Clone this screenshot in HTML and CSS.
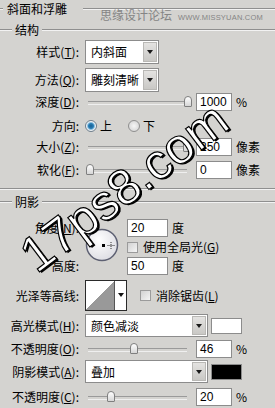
FILE: index.html
```html
<!DOCTYPE html>
<html lang="zh">
<head>
  <meta charset="UTF-8" />
  <title>斜面和浮雕</title>
  <link rel="stylesheet" href="styles.css">
</head>
<body>
  <div class="panel">
    <!-- Bevel and emboss: structure -->
    <div class="legend legend-main"><span class="tick"></span><span>斜面和浮雕</span><span class="rule"></span></div>
    <div class="site-mark">思缘设计论坛<span class="site-url">WWW.MISSYUAN.COM</span></div>

    <div class="legend legend-sub"><span class="tick"></span><span>结构</span><span class="rule"></span></div>

    <div class="row row-select">
      <span class="lbl">样式(<u>T</u>):</span>
      <div class="select select-narrow"><span class="select-value">内斜面</span><span class="select-btn"></span></div>
    </div>
    <div class="row row-select gap-4">
      <span class="lbl">方法(<u>Q</u>):</span>
      <div class="select select-narrow"><span class="select-value">雕刻清晰</span><span class="select-btn"></span></div>
    </div>
    <div class="row gap-1">
      <span class="lbl">深度(<u>D</u>):</span>
      <div class="slider"><span class="thumb" style="left: 99px"></span></div>
      <span class="field">1000</span>
      <span class="unit">%</span>
    </div>
    <div class="row gap-6">
      <span class="lbl">方向:</span>
      <span class="radio checked"></span><span class="radio-text">上</span>
      <span class="radio"></span><span class="radio-text">下</span>
    </div>
    <div class="row gap-3">
      <span class="lbl">大小(<u>Z</u>):</span>
      <div class="slider"><span class="thumb" style="left: 98px"></span></div>
      <span class="field">250</span>
      <span class="unit">像素</span>
    </div>
    <div class="row gap-5">
      <span class="lbl">软化(<u>F</u>):</span>
      <div class="slider"><span class="thumb" style="left: 1px"></span></div>
      <span class="field">0</span>
      <span class="unit">像素</span>
    </div>

    <div class="divider"></div>

    <!-- Shading -->
    <div class="legend legend-sub legend-shade"><span class="tick"></span><span>阴影</span><span class="rule"></span></div>

    <div class="angle-block">
      <span class="lbl angle-lbl">角度(<u>N</u>):</span>
      <div class="dial">
        <svg width="34" height="34" viewBox="0 0 34 34">
          <defs>
            <radialGradient id="dialFill" cx="40%" cy="35%" r="70%">
              <stop offset="0" stop-color="#ffffff" />
              <stop offset="1" stop-color="#dcdce2" />
            </radialGradient>
          </defs>
          <circle cx="17" cy="17" r="15.5" fill="url(#dialFill)" stroke="#5d6072" stroke-width="1.5" />
          <rect x="17" y="16" width="3" height="3" fill="#000" />
          <path d="M26 14v7M22.5 17.5h7" stroke="#333" stroke-width="1" stroke-dasharray="1 1" />
        </svg>
      </div>
      <div class="cell angle-cell"><span class="field field-wide">20</span><span class="unit">度</span></div>
      <div class="cell global-cell"><span class="checkbox"></span><span>使用全局光(<u>G</u>)</span></div>
      <span class="lbl altitude-lbl">高度:</span>
      <div class="cell altitude-cell"><span class="field field-wide">50</span><span class="unit">度</span></div>
    </div>

    <div class="row row-contour">
      <span class="lbl">光泽等高线:</span>
      <div class="contour"><span class="contour-curve"></span><span class="contour-btn"></span></div>
      <span class="checkbox"></span><span>消除锯齿(<u>L</u>)</span>
    </div>

    <div class="row row-mode">
      <span class="lbl">高光模式(<u>H</u>):</span>
      <div class="select select-wide"><span class="select-value">颜色减淡</span><span class="select-btn"></span></div>
      <span class="swatch swatch-white"></span>
    </div>
    <div class="row gap-3">
      <span class="lbl">不透明度(<u>O</u>):</span>
      <div class="slider"><span class="thumb" style="left: 45px"></span></div>
      <span class="field">46</span>
      <span class="unit">%</span>
    </div>
    <div class="row row-mode gap-2">
      <span class="lbl">阴影模式(<u>A</u>):</span>
      <div class="select select-wide"><span class="select-value">叠加</span><span class="select-btn"></span></div>
      <span class="swatch swatch-black"></span>
    </div>
    <div class="row gap-5">
      <span class="lbl">不透明度(<u>C</u>):</span>
      <div class="slider"><span class="thumb" style="left: 22px"></span></div>
      <span class="field">20</span>
      <span class="unit">%</span>
    </div>

    <div class="stamp">17ps8.com</div>
  </div>
</body>
</html>
```

FILE: styles.css
```css
* {
  box-sizing: border-box;
}

body {
  margin: 0;
  background-color: #d4d3d0;
  font-family: "Noto Sans CJK SC", "Liberation Sans", sans-serif;
  font-size: 12px;
  color: #000;
}

.panel {
  position: relative;
  width: 275px;
  height: 408px;
  overflow: hidden;
}

u {
  text-decoration-thickness: 1px;
  text-underline-offset: 1px;
}

/* Group headings with etched lines */
.legend {
  display: flex;
  align-items: center;
  line-height: 14px;
}

.tick, .rule {
  height: 2px;
  border-top: 1px solid #8f8f8f;
  border-bottom: 1px solid #f2f2f2;
}

.rule {
  flex: 1;
}

.legend-main {
  height: 18px;
}

.legend-main .tick {
  width: 3px;
  margin-right: 4px;
}

.legend-main .rule {
  margin-left: 16px;
}

.legend-sub {
  height: 20px;
  margin-top: 2px;
}

.legend-sub .tick {
  width: 12px;
  margin-right: 3px;
}

.legend-sub .rule {
  margin-left: 3px;
}

.legend-shade {
  height: 16px;
  margin-top: 4px;
}

.divider {
  height: 2px;
  margin-top: 9px;
  border-top: 1px solid #8f8f8f;
  border-bottom: 1px solid #f2f2f2;
}

.site-mark {
  position: absolute;
  left: 100px;
  top: 7px;
  color: #858585;
  font-size: 12px;
  line-height: 16px;
  white-space: nowrap;
}

.site-url {
  margin-left: 6px;
  font-family: "Liberation Sans", sans-serif;
  font-size: 7.5px;
  letter-spacing: 0.2px;
}

/* Form rows */
.row {
  display: flex;
  align-items: center;
  height: 18px;
  line-height: 14px;
  white-space: nowrap;
}

.gap-1 { margin-top: 1px; }
.gap-2 { margin-top: 2px; }
.gap-3 { margin-top: 3px; }
.gap-4 { margin-top: 4px; }
.gap-5 { margin-top: 5px; }
.gap-6 { margin-top: 6px; }

.lbl {
  width: 79px;
  margin-right: 6px;
  text-align: right;
  white-space: nowrap;
}

.row-select {
  height: 24px;
}

.row-mode {
  height: 23px;
}

.row-contour {
  height: 31px;
  margin-top: 5px;
}

.row-mode:not(.gap-2) {
  margin-top: 3px;
}

/* Dropdowns */
.select {
  display: flex;
  align-items: stretch;
  height: 100%;
  background: #fff;
  border: 1px solid #8c8c8c;
}

.select-narrow {
  width: 74px;
}

.select-wide {
  width: 123px;
}

.select-value {
  flex: 1;
  padding-left: 5px;
  display: flex;
  align-items: center;
}

.select-btn {
  position: relative;
  width: 14px;
  margin: 1px;
  background: linear-gradient(#e4e3e1, #c9c8c5);
  border: 1px solid #b9b8b5;
}

.select-btn::after {
  content: "";
  position: absolute;
  left: 3px;
  top: 50%;
  margin-top: -2px;
  border-left: 3px solid transparent;
  border-right: 3px solid transparent;
  border-top: 4px solid #1a1a1a;
}

/* Sliders */
.slider {
  position: relative;
  width: 105px;
  height: 18px;
}

.slider::before {
  content: "";
  position: absolute;
  left: 3px;
  right: 3px;
  top: 8px;
  height: 2px;
  border-top: 1px solid #9a9a9a;
  border-bottom: 1px solid #efefef;
}

.thumb {
  position: absolute;
  top: 3px;
  width: 8px;
  height: 11px;
  border: 1px solid #7f7f7f;
  border-radius: 4px 4px 1px 1px;
  background: linear-gradient(#ffffff, #d6d6d6);
}

.field {
  width: 36px;
  height: 18px;
  margin-left: 6px;
  padding-left: 3px;
  background: #fff;
  border: 1px solid #8c8c8c;
  font-family: "Liberation Sans", sans-serif;
  font-size: 12px;
  line-height: 16px;
}

.field-wide {
  width: 41px;
  margin-left: 0;
}

.unit {
  margin-left: 4px;
}

/* Radios and checkboxes */
.radio {
  width: 12px;
  height: 12px;
  border-radius: 50%;
  border: 1px solid #8f8f8f;
  background: radial-gradient(circle at 50% 50%, #f6f6f6, #cfcfcf);
}

.radio.checked {
  border-color: #6f7f8c;
  background: radial-gradient(circle at 50% 50%, #175f92 0, #2a7fb6 2.5px, #8fc0df 3.5px, #f0f4f7 4.5px, #c4ccd3 100%);
}

.radio-text {
  margin-left: 3px;
  margin-right: 16px;
}

.checkbox {
  width: 11px;
  height: 11px;
  margin-right: 5px;
  border: 1px solid #9b9b9b;
  background: linear-gradient(135deg, #d2d2d2, #f5f5f5);
}

/* Angle block with dial */
.angle-block {
  display: grid;
  grid-template-columns: 85px 42px 1fr;
  grid-template-rows: 18px 18px 18px;
  row-gap: 1px;
  margin-top: 9px;
  line-height: 14px;
}

.angle-block .lbl {
  align-self: center;
}

.angle-lbl { grid-column: 1; grid-row: 1; }
.altitude-lbl { grid-column: 1; grid-row: 3; }

.dial {
  grid-column: 2;
  grid-row: 1 / 4;
  margin-top: 9px;
  height: 34px;
}

.dial svg {
  display: block;
}

.cell {
  display: flex;
  align-items: center;
  white-space: nowrap;
}

.angle-cell { grid-column: 3; grid-row: 1; }
.global-cell { grid-column: 3; grid-row: 2; }
.altitude-cell { grid-column: 3; grid-row: 3; }

/* Gloss contour */
.contour {
  display: flex;
  width: 42px;
  height: 31px;
  margin-right: 13px;
  border: 1px solid #2a2a2a;
  background: #fff;
}

.contour-curve {
  width: 29px;
  border-right: 1px solid #555;
  background: linear-gradient(to top left, #999999 50%, #ffffff 50%);
}

.contour-btn {
  position: relative;
  flex: 1;
}

.contour-btn::after {
  content: "";
  position: absolute;
  left: 3px;
  top: 12px;
  border-left: 3px solid transparent;
  border-right: 3px solid transparent;
  border-top: 4px solid #111;
}

/* Colour swatches */
.swatch {
  width: 31px;
  height: 16px;
  margin-left: 3px;
  border: 1px solid #8c8c8c;
}

.swatch-white {
  background: #fff;
}

.swatch-black {
  background: #000;
}

/* Site watermark drawn across the panel */
.stamp {
  position: absolute;
  left: 124px;
  top: 187px;
  transform: translate(-50%, -50%) rotate(-37deg);
  font-family: "Liberation Sans", sans-serif;
  font-size: 50px;
  line-height: 50px;
  color: #fff;
  -webkit-text-stroke: 1.2px #000;
  text-shadow: 1px 2px 0 #000;
  white-space: nowrap;
  pointer-events: none;
}
```
